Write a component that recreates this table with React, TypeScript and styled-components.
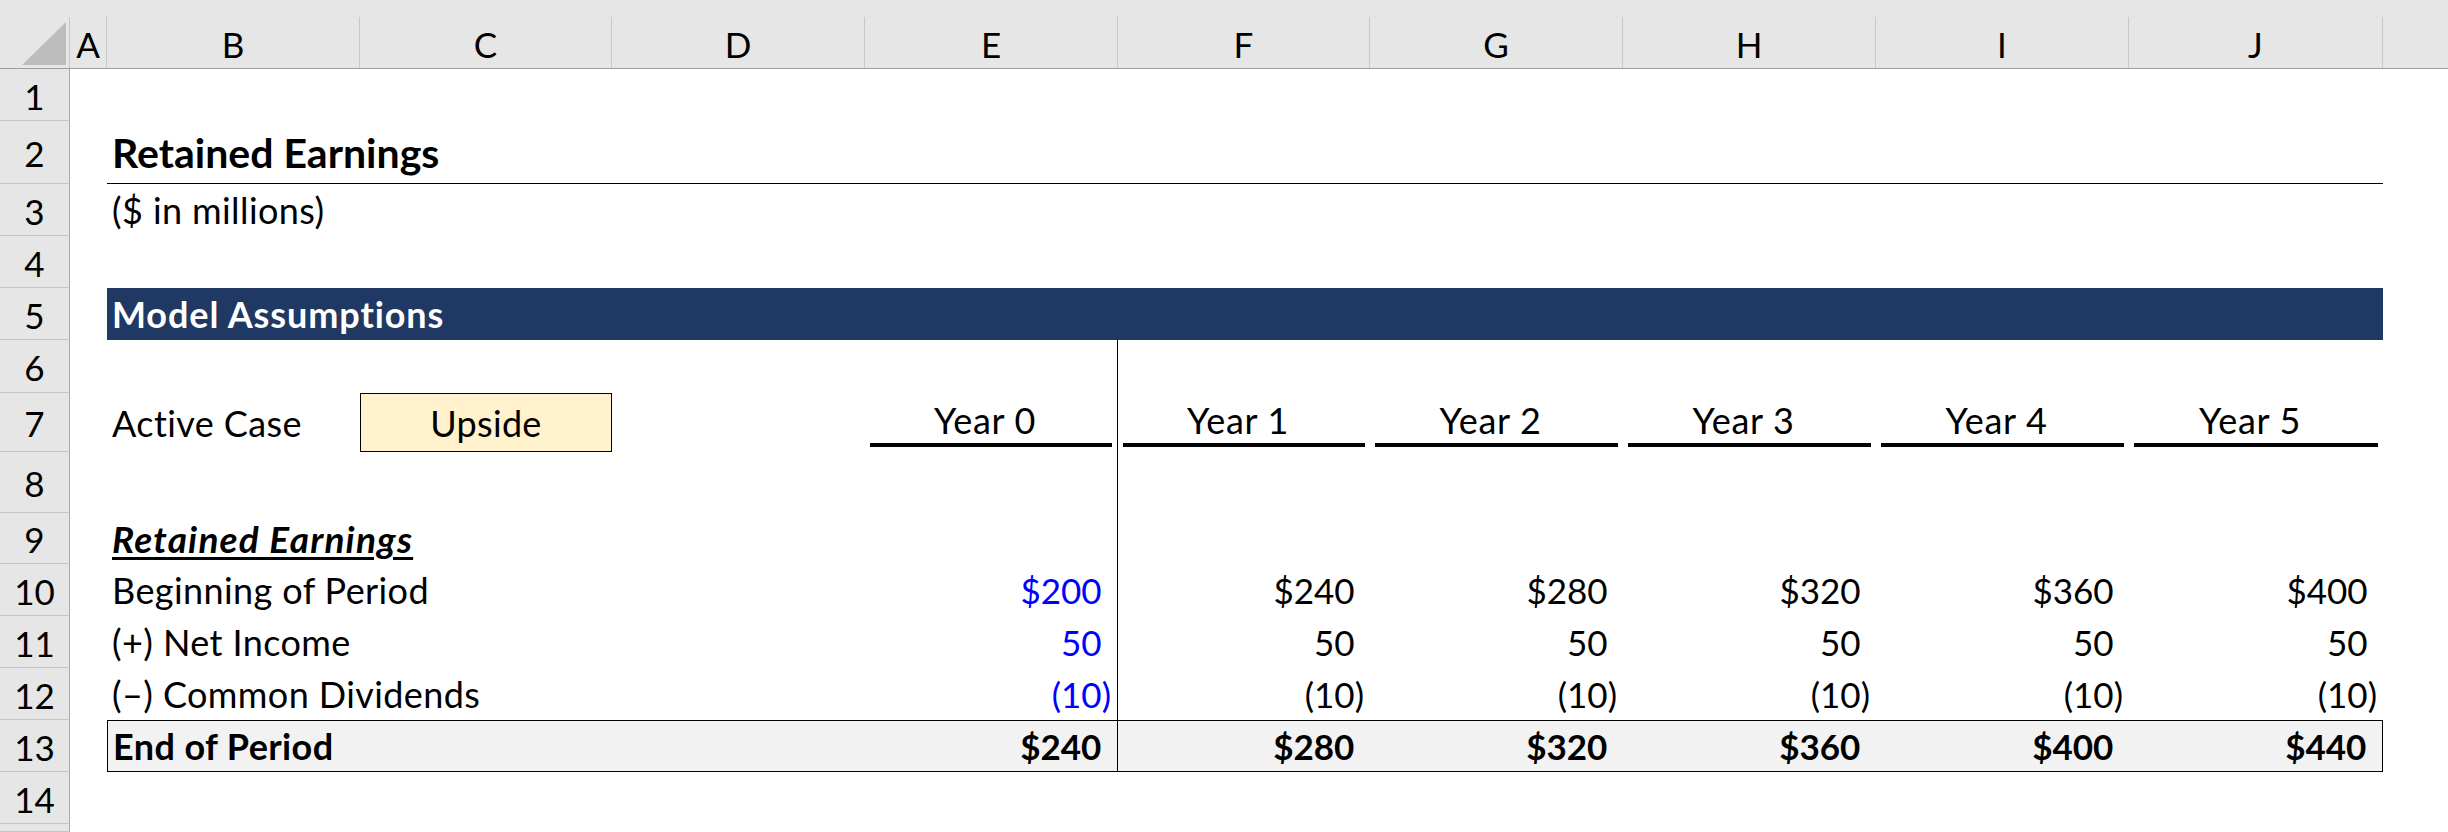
import React from "react";
import styled, { createGlobalStyle } from "styled-components";

const GlobalStyle = createGlobalStyle`
  html, body {
    margin: 0;
    padding: 0;
    background: #ffffff;
  }
  body {
    width: 2448px;
    height: 832px;
    overflow: hidden;
    font-family: Lato, "Liberation Sans", sans-serif;
    color: #000000;
  }
`;

const COLS =
  "70px 37px 253px 252px 253px 253px 252px 253px 253px 253px 254px 1fr";

const Sheet = styled.div`
  width: 2448px;
  height: 832px;
  overflow: hidden;
  display: flex;
  flex-direction: column;
`;

const HeaderRow = styled.div`
  display: grid;
  grid-template-columns: ${COLS};
  height: 69px;
  flex: none;
  box-sizing: border-box;
  padding-top: 17px;
  background: #e6e6e6;
  border-bottom: 1px solid #9e9e9e;
`;

const Corner = styled.div`
  display: flex;
  align-items: flex-end;
  justify-content: flex-end;
  padding: 0 3px 3px 0;
  border-right: 1px solid #c8c8c8;
`;

const CornerMark = styled.div`
  width: 44px;
  height: 43px;
  background: #bdbdbd;
  clip-path: polygon(100% 0, 100% 100%, 0 100%);
`;

const ColHead = styled.div<{ $open?: boolean }>`
  display: flex;
  align-items: center;
  justify-content: center;
  font-size: 35px;
  padding-top: 2px;
  border-right: ${(p) => (p.$open ? "none" : "1px solid #c8c8c8")};
`;

const Row = styled.div<{ $h: number }>`
  display: grid;
  grid-template-columns: ${COLS};
  height: ${(p) => p.$h}px;
  flex: none;
`;

const RowHead = styled.div`
  display: flex;
  align-items: center;
  justify-content: center;
  box-sizing: border-box;
  background: #e6e6e6;
  border-right: 1px solid #a8a8a8;
  border-bottom: 1px solid #c4c4c4;
  font-size: 35px;
  padding-top: 2px;
`;

const Blank = styled.div<{ $divider?: boolean }>`
  box-sizing: border-box;
  border-right: ${(p) => (p.$divider ? "1px solid #000" : "none")};
`;

const Label = styled.div`
  display: flex;
  align-items: center;
  padding-left: 5px;
  font-size: 36px;
  letter-spacing: 0.4px;
  white-space: nowrap;
`;

const Title = styled(Label)`
  grid-column: span 9;
  font-size: 41px;
  font-weight: 700;
  letter-spacing: 0;
  box-sizing: border-box;
  border-bottom: 1px solid #000;
`;

const Band = styled(Label)`
  grid-column: span 9;
  background: #203864;
  color: #ffffff;
  font-weight: 700;
  letter-spacing: 0.9px;
`;

const SectionLabel = styled(Label)`
  font-size: 37px;
  font-weight: 700;
  font-style: italic;
  letter-spacing: 1.2px;
  text-decoration: underline;
  text-decoration-thickness: 3px;
  text-underline-offset: 4px;
`;

const CaseBox = styled.div`
  display: flex;
  align-items: center;
  justify-content: center;
  box-sizing: border-box;
  background: #fff2cc;
  border: 1px solid #000;
  font-size: 36px;
  letter-spacing: 0.3px;
`;

const YearCell = styled.div<{ $divider?: boolean }>`
  display: flex;
  align-items: flex-end;
  box-sizing: border-box;
  padding: 0 5px 5px;
  border-right: ${(p) => (p.$divider ? "1px solid #000" : "none")};
`;

const YearLabel = styled.div`
  flex: 1;
  text-align: center;
  font-size: 36px;
  letter-spacing: 0.7px;
  line-height: 1;
  padding: 0 12px 5px 0;
  border-bottom: 4px solid #000;
`;

const NumCell = styled.div<{
  $input?: boolean;
  $divider?: boolean;
  $total?: boolean;
  $last?: boolean;
}>`
  display: flex;
  align-items: center;
  justify-content: flex-end;
  box-sizing: border-box;
  padding-right: 6px;
  font-size: 35px;
  white-space: nowrap;
  color: ${(p) => (p.$input ? "#0000ff" : "#000000")};
  font-weight: ${(p) => (p.$total ? 700 : 400)};
  background: ${(p) => (p.$total ? "#f2f2f2" : "transparent")};
  border-top: ${(p) => (p.$total ? "1px solid #000" : "none")};
  border-bottom: ${(p) => (p.$total ? "1px solid #000" : "none")};
  border-right: ${(p) => (p.$divider || p.$last ? "1px solid #000" : "none")};
`;

const Pad = styled.span`
  visibility: hidden;
`;

const TotalLabel = styled(Label)`
  grid-column: span 3;
  box-sizing: border-box;
  font-weight: 700;
  background: #f2f2f2;
  border: 1px solid #000;
  border-right: none;
`;

const LETTERS = ["A", "B", "C", "D", "E", "F", "G", "H", "I", "J"];
const HEIGHTS = [52, 63, 52, 52, 52, 53, 59, 61, 51, 52, 52, 52, 52, 52, 8];
const YEARS = [0, 1, 2, 3, 4, 5];

const beginning = [200, 240, 280, 320, 360, 400];
const income = [50, 50, 50, 50, 50, 50];
const dividends = [-10, -10, -10, -10, -10, -10];
const ending = beginning.map((b, i) => b + income[i] + dividends[i]);

const fmt = (v: number, dollar: boolean) =>
  v < 0 ? `(${Math.abs(v)})` : `${dollar ? "$" : ""}${v}`;

const Value: React.FC<{ v: number; dollar?: boolean }> = ({ v, dollar }) => (
  <>
    {fmt(v, !!dollar)}
    {v >= 0 && <Pad>)</Pad>}
  </>
);

const DataRow: React.FC<{
  n: number;
  label: string;
  values: number[];
  dollar?: boolean;
}> = ({ n, label, values, dollar }) => (
  <Row $h={HEIGHTS[n - 1]}>
    <RowHead>{n}</RowHead>
    <Blank />
    <Label>{label}</Label>
    <Blank />
    <Blank />
    {values.map((v, i) => (
      <NumCell key={i} $input={i === 0} $divider={i === 0}>
        <Value v={v} dollar={dollar} />
      </NumCell>
    ))}
  </Row>
);

const DividerRow: React.FC<{ n: number; children?: React.ReactNode }> = ({
  n,
  children,
}) => (
  <Row $h={HEIGHTS[n - 1]}>
    <RowHead>{n}</RowHead>
    <Blank />
    {children ?? <Blank />}
    <Blank />
    <Blank />
    <Blank $divider />
  </Row>
);

const App: React.FC = () => {
  return (
    <>
      <GlobalStyle />
      <Sheet>
        <HeaderRow>
          <Corner>
            <CornerMark />
          </Corner>
          {LETTERS.map((l) => (
            <ColHead key={l}>{l}</ColHead>
          ))}
          <ColHead $open />
        </HeaderRow>

        <Row $h={HEIGHTS[0]}>
          <RowHead>1</RowHead>
        </Row>
        <Row $h={HEIGHTS[1]}>
          <RowHead>2</RowHead>
          <Blank />
          <Title>Retained Earnings</Title>
        </Row>
        <Row $h={HEIGHTS[2]}>
          <RowHead>3</RowHead>
          <Blank />
          <Label>($ in millions)</Label>
        </Row>
        <Row $h={HEIGHTS[3]}>
          <RowHead>4</RowHead>
        </Row>
        <Row $h={HEIGHTS[4]}>
          <RowHead>5</RowHead>
          <Blank />
          <Band>Model Assumptions</Band>
        </Row>
        <DividerRow n={6} />
        <Row $h={HEIGHTS[6]}>
          <RowHead>7</RowHead>
          <Blank />
          <Label>Active Case</Label>
          <CaseBox>Upside</CaseBox>
          <Blank />
          {YEARS.map((y) => (
            <YearCell key={y} $divider={y === 0}>
              <YearLabel>Year {y}</YearLabel>
            </YearCell>
          ))}
        </Row>
        <DividerRow n={8} />
        <DividerRow n={9}>
          <SectionLabel>Retained Earnings</SectionLabel>
        </DividerRow>
        <DataRow n={10} label="Beginning of Period" values={beginning} dollar />
        <DataRow n={11} label="(+) Net Income" values={income} />
        <DataRow n={12} label="(–) Common Dividends" values={dividends} />
        <Row $h={HEIGHTS[12]}>
          <RowHead>13</RowHead>
          <Blank />
          <TotalLabel>End of Period</TotalLabel>
          {ending.map((v, i) => (
            <NumCell
              key={i}
              $total
              $divider={i === 0}
              $last={i === ending.length - 1}
            >
              <Value v={v} dollar />
            </NumCell>
          ))}
        </Row>
        <Row $h={HEIGHTS[13]}>
          <RowHead>14</RowHead>
        </Row>
        <Row $h={HEIGHTS[14]}>
          <RowHead />
        </Row>
      </Sheet>
    </>
  );
};

export default App;
